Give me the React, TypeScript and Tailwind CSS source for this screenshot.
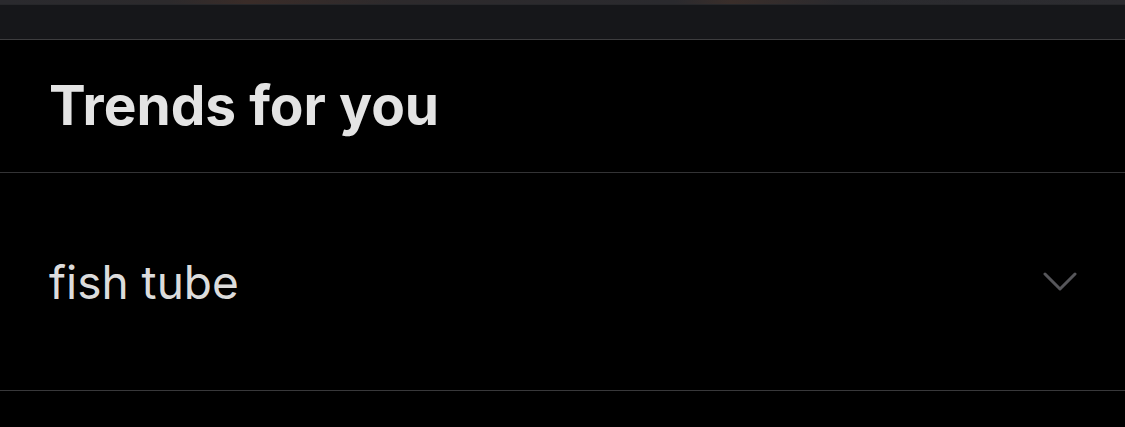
import React from "react";

export default function App() {
  return (
    <div className="w-[1125px] h-[427px] bg-black overflow-hidden" style={{ fontFamily: "Inter, 'Noto Sans', sans-serif" }}>
      <div className="h-[4px] bg-[linear-gradient(90deg,#2a2a2e_0%,#2c2a2c_15%,#3a2c28_22%,#2d2a2c_35%,#2a2a2e_60%,#3a2e2a_65%,#2a2a2e_75%,#2c2c30_100%)]" />
      <div className="h-[36px] bg-[#16171a] border-t border-[#26272a] border-b border-b-[#3d3d3f]" />
      <div className="h-[133px] border-b border-[#333335] flex items-center pl-[49px] pb-[2px]">
        <h1 className="text-[55px] font-bold text-[#e4e4e4] tracking-[0px] leading-none">Trends for you</h1>
      </div>
      <div className="h-[218px] border-b border-[#38383a] flex items-center justify-between pl-[49px] pr-[48px]">
        <span className="text-[46px] text-[#dcdcdc] leading-none tracking-[0px]">fish tube</span>
        <svg width="34" height="20" viewBox="0 0 34 20" fill="none">
          <path d="M2 2 L17 17 L32 2" stroke="#56565a" strokeWidth="3" strokeLinecap="round" strokeLinejoin="round" />
        </svg>
      </div>
    </div>
  );
}
